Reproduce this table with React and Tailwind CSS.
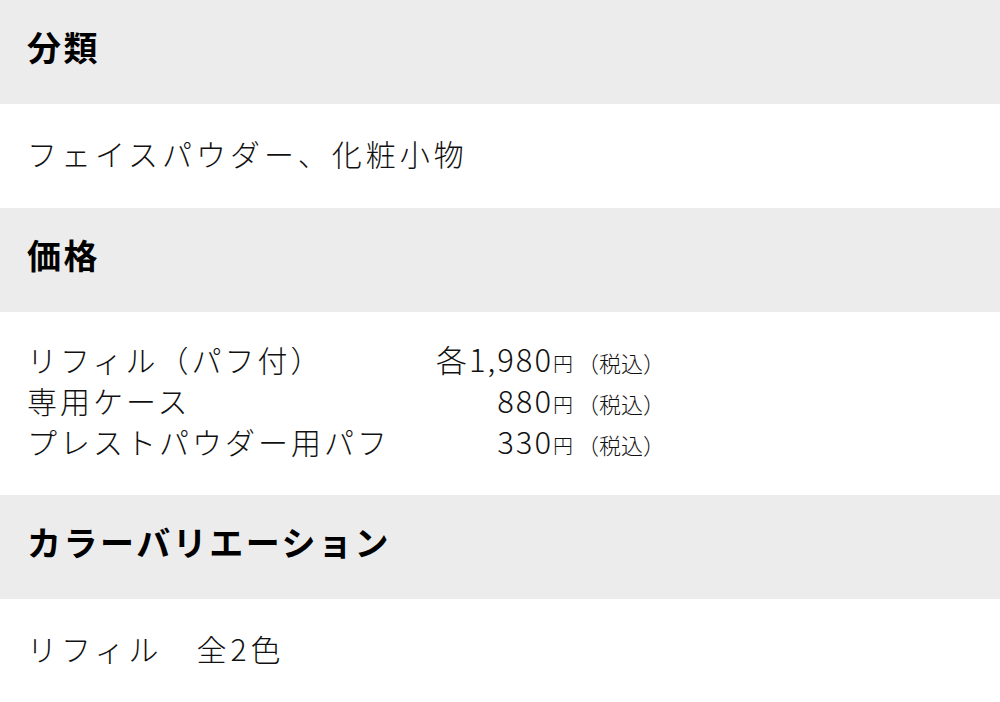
import React from "react";

const prices = [
  { name: "リフィル（パフ付）", price: "各1,980" },
  { name: "専用ケース", price: "880" },
  { name: "プレストパウダー用パフ", price: "330" },
];

const Heading = ({ children }) => (
  <div className="h-[104px] bg-[#ececec] flex items-center px-[27px] pb-[10px]">
    <h2 className="text-[34px] font-bold tracking-[2.5px] text-black leading-none">
      {children}
    </h2>
  </div>
);

export default function App() {
  return (
    <div
      className="w-[1000px] h-[702px] bg-white text-[#111] overflow-hidden"
      style={{ fontFamily: '"Noto Sans CJK JP", "Noto Sans", sans-serif' }}
    >
      <Heading>分類</Heading>
      <div className="h-[104px] flex items-center px-[27px] pb-[6px]">
        <p className="text-[30px] font-light tracking-[4px] leading-none">
          フェイスパウダー、化粧小物
        </p>
      </div>

      <Heading>価格</Heading>
      <div className="h-[183px] flex flex-col justify-center px-[27px] pb-[8px]">
        {prices.map((row) => (
          <div key={row.name} className="flex items-baseline h-[41px] leading-[41px] font-light">
            <span className="w-[400px] text-[30px] tracking-[3px]">{row.name}</span>
            <span className="w-[126px] text-right text-[31px] tracking-[2px]">
              {row.price}
            </span>
            <span className="text-[20px]">円</span>
            <span className="text-[22px] ml-[4px]">（税込）</span>
          </div>
        ))}
      </div>

      <Heading>カラーバリエーション</Heading>
      <div className="h-[104px] flex items-center px-[27px] pb-[6px]">
        <p className="text-[30px] font-light tracking-[4px] leading-none">
          リフィル　全2色
        </p>
      </div>
    </div>
  );
}
